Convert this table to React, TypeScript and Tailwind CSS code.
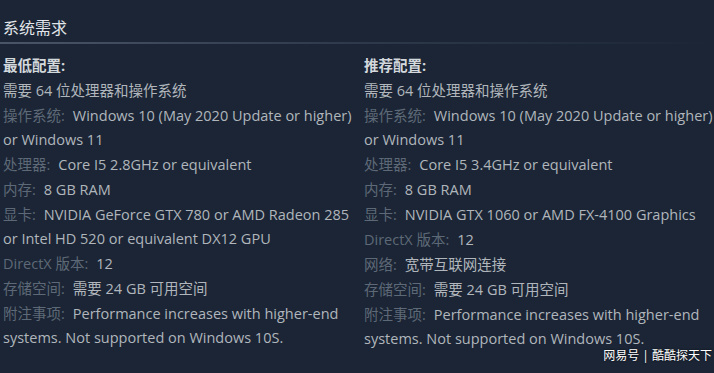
import React from 'react';

type Spec = { label?: string; value: string };

const minimum: Spec[] = [
  { value: '需要 64 位处理器和操作系统' },
  { label: '操作系统', value: 'Windows 10 (May 2020 Update or higher) or Windows 11' },
  { label: '处理器', value: 'Core I5 2.8GHz or equivalent' },
  { label: '内存', value: '8 GB RAM' },
  { label: '显卡', value: 'NVIDIA GeForce GTX 780 or AMD Radeon 285 or Intel HD 520 or equivalent DX12 GPU' },
  { label: 'DirectX 版本', value: '12' },
  { label: '存储空间', value: '需要 24 GB 可用空间' },
  { label: '附注事项', value: 'Performance increases with higher-end systems. Not supported on Windows 10S.' },
];

const recommended: Spec[] = [
  { value: '需要 64 位处理器和操作系统' },
  { label: '操作系统', value: 'Windows 10 (May 2020 Update or higher) or Windows 11' },
  { label: '处理器', value: 'Core I5 3.4GHz or equivalent' },
  { label: '内存', value: '8 GB RAM' },
  { label: '显卡', value: 'NVIDIA GTX 1060 or AMD FX-4100 Graphics' },
  { label: 'DirectX 版本', value: '12' },
  { label: '网络', value: '宽带互联网连接' },
  { label: '存储空间', value: '需要 24 GB 可用空间' },
  { label: '附注事项', value: 'Performance increases with higher-end systems. Not supported on Windows 10S.' },
];

function SpecColumn({ title, items, className }: { title: string; items: Spec[]; className: string }) {
  return (
    <div className={className}>
      <div className="leading-[24px] mb-[1px] font-bold text-[#d3d8dd]">{title}:</div>
      <ul>
        {items.map((item, i) => (
          <li key={i} className="leading-[24px] mb-[1px] text-[#b0b6bc]">
            {item.label && <span className="text-[#5e6977] mr-[8px]">{item.label}:</span>}
            {item.value}
          </li>
        ))}
      </ul>
    </div>
  );
}

export default function App() {
  return (
    <div
      className="relative w-[714px] h-[373px] overflow-hidden bg-[#1b2535] text-[14.5px]"
      style={{ fontFamily: '"Open Sans", "Noto Sans CJK SC", sans-serif' }}
    >
      <h2 className="pt-[18px] pl-[3px] text-[16px] leading-[20px] text-[#e2e6ea]">系统需求</h2>
      <div className="mt-[4px] h-[2px] bg-gradient-to-r from-[#4a5668] via-[#2e3a4b] to-transparent" />
      <div className="flex pt-[10px]">
        <SpecColumn title="最低配置" items={minimum} className="ml-[3px] w-[353px]" />
        <SpecColumn title="推荐配置" items={recommended} className="ml-[8px] w-[350px]" />
      </div>
      <div className="absolute right-[2px] bottom-[10px] text-[12px] leading-[14px] text-white [text-shadow:0_0_2px_rgba(0,0,0,0.8)]">
        网易号 | 酷酷探天下
      </div>
    </div>
  );
}
